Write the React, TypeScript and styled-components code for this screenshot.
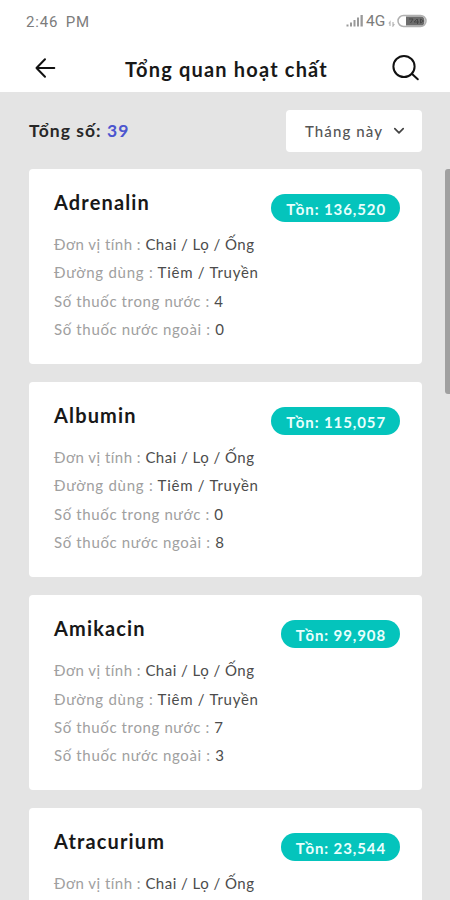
import React from "react";
import styled, { createGlobalStyle } from "styled-components";

const GlobalStyle = createGlobalStyle`
  * { box-sizing: border-box; }
  html, body { margin: 0; height: 900px; overflow: hidden; background: #e4e4e4; }
  body { font-family: Lato, "Noto Sans", sans-serif; }
`;

const Screen = styled.div`
  width: 450px;
  height: 900px;
  display: flex;
  flex-direction: column;
  overflow: hidden;
  background: #e4e4e4;
`;

const StatusBar = styled.div`
  flex: none;
  height: 43px;
  padding: 0 22px 0 26px;
  display: flex;
  align-items: center;
  justify-content: space-between;
  background: #fff;
  color: #7c7c7c;
  font-family: Roboto, sans-serif;
  font-size: 15px;
`;

const Clock = styled.span`
  letter-spacing: 0.8px;
  word-spacing: 3px;
`;

const StatusIcons = styled.div`
  display: flex;
  align-items: center;
  margin-top: -2px;
`;

const Network = styled.span`
  margin: 1px 0 0 2px;
  width: 22px;
  font-size: 15.5px;
`;

const Header = styled.header`
  flex: none;
  height: 49px;
  padding: 0 30px 0 35px;
  display: flex;
  align-items: center;
  justify-content: space-between;
  background: #fff;
`;

const IconButton = styled.button`
  display: flex;
  padding: 0;
  border: 0;
  background: none;
  color: #111;
`;

const PageTitle = styled.h1`
  margin: 2px -4px 0 0;
  font-size: 20px;
  line-height: 24px;
  font-weight: 700;
  letter-spacing: 1.18px;
  color: #181818;
  white-space: nowrap;
`;

const Toolbar = styled.div`
  flex: none;
  height: 77px;
  padding: 0 28px 0 29px;
  display: flex;
  align-items: center;
  justify-content: space-between;
`;

const Total = styled.div`
  font-size: 17.5px;
  font-weight: 700;
  letter-spacing: 1.05px;
  color: #282828;
  white-space: nowrap;
`;

const TotalValue = styled.span`
  color: #4b55cf;
`;

const PeriodSelect = styled.button`
  width: 136px;
  height: 42px;
  padding: 0 17px 0 19px;
  display: flex;
  align-items: center;
  justify-content: space-between;
  border: 0;
  border-radius: 4px;
  background: #fff;
  color: #555;
  font: 500 15px Lato, sans-serif;
  letter-spacing: 1.1px;
  white-space: nowrap;
`;

const ListArea = styled.main`
  flex: 1;
  min-height: 0;
  display: flex;
  justify-content: space-between;
  padding-left: 29px;
  overflow: hidden;
`;

const CardList = styled.div`
  width: 393px;
  display: flex;
  flex-direction: column;
  gap: 18px;
`;

const ScrollThumb = styled.div`
  width: 5px;
  height: 225px;
  border-radius: 3px 0 0 3px;
  background: #a0a0a0;
`;

const Card = styled.article`
  flex: none;
  height: 195.1px;
  padding: 20px 22px 0 25px;
  border-radius: 4px;
  background: #fff;
`;

const CardHead = styled.div`
  height: 41px;
  display: flex;
  align-items: flex-start;
  justify-content: space-between;
`;

const DrugName = styled.h2`
  margin: 0;
  font-size: 20px;
  line-height: 26px;
  font-weight: 700;
  letter-spacing: 1.15px;
  color: #181818;
`;

const StockBadge = styled.span`
  height: 28px;
  margin-top: 5px;
  padding: 1px 14px 0 15px;
  display: flex;
  align-items: center;
  border-radius: 14px;
  background: #04c4bc;
  color: #e9fffd;
  font-size: 15px;
  font-weight: 700;
  letter-spacing: 0.9px;
  white-space: nowrap;
`;

const Detail = styled.div<{ $tracking: number }>`
  height: 28.35px;
  line-height: 28.35px;
  font-size: 15px;
  letter-spacing: ${(p) => p.$tracking}px;
  color: #a0a0a0;
  white-space: nowrap;
`;

const DetailValue = styled.span`
  color: #4c4c4c;
`;

const SignalIcon = () => (
  <svg width="18" height="13" viewBox="0 0 18 13" fill="#999">
    <rect x="0.500" y="10.500" width="2" height="2" />
    <rect x="4" y="8.500" width="2" height="4" />
    <rect x="7.500" y="6" width="2" height="6.500" />
    <rect x="11" y="3.500" width="2" height="9" />
    <rect x="14.500" y="1" width="2.300" height="11.500" />
  </svg>
);

const DataIcon = () => (
  <svg width="8" height="12" viewBox="0 0 8 12" fill="none" stroke="#b5b5b5" strokeWidth="1.200">
    <path d="M2 11V7L.8 8.500M5 7v4l1.400-2" />
  </svg>
);

const BatteryIcon = () => (
  <svg width="32" height="14" viewBox="0 0 32 14">
    <rect x="2" y="1.500" width="28" height="11" rx="5.500" fill="#fff" stroke="#b0b0b0" strokeWidth="1.500" />
    <path d="M10 2.500h15q3.500 0 3.500 4.500t-3.500 4.500H10z" fill="#6c6c6c" />
    <path d="M13 5h4l-2.500 4M21 5l-3 3h5M21.500 5v5M24.500 5l3 2-3 2z" fill="none" stroke="#484848" />
  </svg>
);

const BackIcon = () => (
  <svg width="22" height="22" viewBox="0 0 22 22" fill="none" stroke="currentColor" strokeWidth="2" strokeLinecap="round" strokeLinejoin="round">
    <path d="M19.300 11H1.500M10 2.200L1.500 11l8.500 8.800" />
  </svg>
);

const SearchIcon = () => (
  <svg width="28" height="28" viewBox="0 0 28 28" fill="none" stroke="currentColor" strokeWidth="2" strokeLinecap="round">
    <circle cx="12" cy="12.500" r="10.600" />
    <path d="M19.800 19.800l6 5.500" />
  </svg>
);

const ChevronIcon = () => (
  <svg width="12" height="8" viewBox="0 0 12 8" fill="none" stroke="#444" strokeWidth="1.700" strokeLinecap="round" strokeLinejoin="round">
    <path d="M1.800 1.700L6 5.900l4.200-4.200" />
  </svg>
);

type Row = { label: string; value: string; tracking: number };

const unit: Row = { label: "Đơn vị tính", value: "Chai / Lọ / Ống", tracking: 0.47 };
const route: Row = { label: "Đường dùng", value: "Tiêm / Truyền", tracking: 0.74 };
const domestic = (n: number): Row => ({ label: "Số thuốc trong nước", value: String(n), tracking: 0.62 });
const foreign = (n: number): Row => ({ label: "Số thuốc nước ngoài", value: String(n), tracking: 0.64 });

const drugs: { name: string; stock: string; rows: Row[] }[] = [
  { name: "Adrenalin", stock: "136,520", rows: [unit, route, domestic(4), foreign(0)] },
  { name: "Albumin", stock: "115,057", rows: [unit, route, domestic(0), foreign(8)] },
  { name: "Amikacin", stock: "99,908", rows: [unit, route, domestic(7), foreign(3)] },
  { name: "Atracurium", stock: "23,544", rows: [unit] },
];

export default function App() {
  return (
    <>
      <GlobalStyle />
      <Screen>
        <StatusBar>
          <Clock>2:46 PM</Clock>
          <StatusIcons>
            <SignalIcon />
            <Network>4G</Network>
            <DataIcon />
            <BatteryIcon />
          </StatusIcons>
        </StatusBar>
        <Header>
          <IconButton aria-label="Quay lại"><BackIcon /></IconButton>
          <PageTitle>Tổng quan hoạt chất</PageTitle>
          <IconButton aria-label="Tìm kiếm"><SearchIcon /></IconButton>
        </Header>
        <Toolbar>
          <Total>Tổng số: <TotalValue>39</TotalValue></Total>
          <PeriodSelect>Tháng này<ChevronIcon /></PeriodSelect>
        </Toolbar>
        <ListArea>
          <CardList>
            {drugs.map((drug) => (
              <Card key={drug.name}>
                <CardHead>
                  <DrugName>{drug.name}</DrugName>
                  <StockBadge>Tồn: {drug.stock}</StockBadge>
                </CardHead>
                {drug.rows.map((row) => (
                  <Detail key={row.label} $tracking={row.tracking}>
                    {row.label} : <DetailValue>{row.value}</DetailValue>
                  </Detail>
                ))}
              </Card>
            ))}
          </CardList>
          <ScrollThumb />
        </ListArea>
      </Screen>
    </>
  );
}
